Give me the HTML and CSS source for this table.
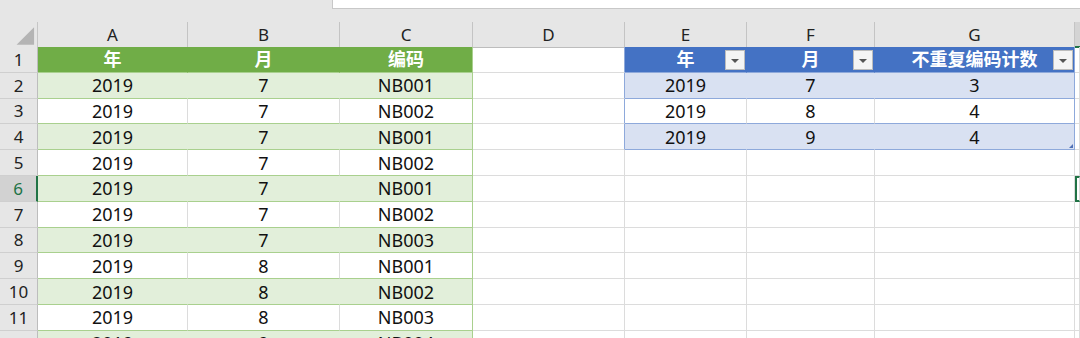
FILE: index.html
```html
<!DOCTYPE html>
<html lang="zh">
<head>
<meta charset="utf-8">
<link rel="stylesheet" href="styles.css">
</head>
<body>
<div class="app">
  <div class="topbar"><div class="fx"></div></div>
  <div class="sheet">
    <div class="row colhead">
      <div class="corner"><svg width="38" height="25" viewBox="0 0 38 25"><polygon points="35,5 35,23 17,23" fill="#b4b4b4"/></svg></div>
      <div class="ch">A</div><div class="ch">B</div><div class="ch">C</div><div class="ch">D</div>
      <div class="ch">E</div><div class="ch">F</div><div class="ch">G</div><div class="ch selc"></div>
    </div>

    <div class="row">
      <div class="rh">1</div>
      <div class="c gh">年</div><div class="c gh">月</div><div class="c gh glast">编码</div>
      <div class="c bpre"></div>
      <div class="c bh">年<span class="dd"></span></div><div class="c bh">月<span class="dd"></span></div><div class="c bh blast">不重复编码计数<span class="dd"></span></div>
      <div class="c"></div>
    </div>

    <div class="row">
      <div class="rh">2</div>
      <div class="c g">2019</div><div class="c g">7</div><div class="c g glast">NB001</div>
      <div class="c bpre"></div>
      <div class="c b">2019</div><div class="c b">7</div><div class="c b blast">3</div>
      <div class="c"></div>
    </div>

    <div class="row">
      <div class="rh">3</div>
      <div class="c gw">2019</div><div class="c gw">7</div><div class="c gw glast">NB002</div>
      <div class="c bpre"></div>
      <div class="c bw">2019</div><div class="c bw">8</div><div class="c bw blast">4</div>
      <div class="c"></div>
    </div>

    <div class="row">
      <div class="rh">4</div>
      <div class="c g">2019</div><div class="c g">7</div><div class="c g glast">NB001</div>
      <div class="c bpre"></div>
      <div class="c b">2019</div><div class="c b">9</div><div class="c b blast">4<span class="handle"></span></div>
      <div class="c"></div>
    </div>

    <div class="row">
      <div class="rh">5</div>
      <div class="c gw">2019</div><div class="c gw">7</div><div class="c gw glast">NB002</div>
      <div class="c"></div><div class="c"></div><div class="c"></div><div class="c"></div><div class="c"></div>
    </div>

    <div class="row">
      <div class="rh selr">6</div>
      <div class="c g">2019</div><div class="c g">7</div><div class="c g glast">NB001</div>
      <div class="c"></div><div class="c"></div><div class="c"></div><div class="c"></div><div class="c active"></div>
    </div>

    <div class="row">
      <div class="rh">7</div>
      <div class="c gw">2019</div><div class="c gw">7</div><div class="c gw glast">NB002</div>
      <div class="c"></div><div class="c"></div><div class="c"></div><div class="c"></div><div class="c"></div>
    </div>

    <div class="row">
      <div class="rh">8</div>
      <div class="c g">2019</div><div class="c g">7</div><div class="c g glast">NB003</div>
      <div class="c"></div><div class="c"></div><div class="c"></div><div class="c"></div><div class="c"></div>
    </div>

    <div class="row">
      <div class="rh">9</div>
      <div class="c gw">2019</div><div class="c gw">8</div><div class="c gw glast">NB001</div>
      <div class="c"></div><div class="c"></div><div class="c"></div><div class="c"></div><div class="c"></div>
    </div>

    <div class="row">
      <div class="rh">10</div>
      <div class="c g">2019</div><div class="c g">8</div><div class="c g glast">NB002</div>
      <div class="c"></div><div class="c"></div><div class="c"></div><div class="c"></div><div class="c"></div>
    </div>

    <div class="row">
      <div class="rh">11</div>
      <div class="c gw">2019</div><div class="c gw">8</div><div class="c gw glast">NB003</div>
      <div class="c"></div><div class="c"></div><div class="c"></div><div class="c"></div><div class="c"></div>
    </div>

    <div class="row">
      <div class="rh">12</div>
      <div class="c g">2019</div><div class="c g">9</div><div class="c g glast">NB004</div>
      <div class="c"></div><div class="c"></div><div class="c"></div><div class="c"></div><div class="c"></div>
    </div>
  </div>
</div>
</body>
</html>
```

FILE: styles.css
```css
html, body {
  margin: 0;
  padding: 0;
  width: 1080px;
  height: 338px;
  overflow: hidden;
  background: #ffffff;
}

.app {
  font-family: "Noto Sans", "Noto Sans CJK SC", sans-serif;
  color: #111;
}

.topbar {
  height: 22px;
  background: #e6e6e6;
  display: flex;
  align-items: flex-start;
}

.fx {
  margin-left: 332px;
  flex: 1;
  height: 8px;
  background: #ffffff;
  border-left: 1px solid #c8c8c8;
  border-bottom: 1px solid #c8c8c8;
}

.sheet {
  display: flex;
  flex-direction: column;
}

.row {
  display: grid;
  grid-template-columns: 38px 150px 152px 133px 152px 122px 128px 200px 1fr;
  height: 25.8px;
}

.row > div {
  box-sizing: border-box;
  display: flex;
  align-items: center;
  justify-content: center;
  position: relative;
  font-size: 18px;
  line-height: 1;
  white-space: nowrap;
}

/* column header row */
.colhead {
  height: 25px;
  background: #e6e6e6;
}

.corner {
  border-right: 1px solid #c6c6c6;
  border-bottom: 1px solid #bdbdbd;
}

.corner svg {
  display: block;
}

.ch {
  font-size: 17px !important;
  color: #222;
  border-right: 1px solid #c4c4c4;
  border-bottom: 1px solid #bdbdbd;
}

.ch.selc {
  background: #d4d4d4;
  border-right: none;
  border-bottom: 2px solid #217346;
}

/* row headers */
.rh {
  background: #e6e6e6;
  color: #222;
  font-size: 17px !important;
  border-right: 1px solid #bdbdbd;
  border-bottom: 1px solid #cfcfcf;
}

.rh.selr {
  background: #d2d2d2;
  color: #217346;
  border-right: 2px solid #217346;
}

/* plain cells */
.c {
  border-right: 1px solid #dcdcdc;
  border-bottom: 1px solid #dcdcdc;
}

/* green table */
.gh {
  background: #70ad47;
  color: #ffffff;
  font-weight: 700;
  border-right-color: #70ad47;
  border-bottom-color: #a9d08e;
}

.g {
  background: #e2efda;
  border-right-color: #e2efda;
  border-bottom-color: #a9d08e;
}

.gw {
  border-bottom-color: #a9d08e;
}

.glast {
  border-right-color: #a9d08e;
}

/* blue table */
.bpre {
  border-right-color: #8ea9db;
}

.bh {
  background: #4472c4;
  color: #ffffff;
  font-weight: 700;
  border-right-color: #4472c4;
  border-bottom-color: #8ea9db;
}

.b {
  background: #d9e1f2;
  border-right-color: #d9e1f2;
  border-bottom-color: #8ea9db;
}

.bw {
  border-bottom-color: #8ea9db;
}

.blast {
  border-right-color: #8ea9db;
}

.dd {
  position: absolute;
  right: 1px;
  top: 3px;
  width: 20px;
  height: 20px;
  box-sizing: border-box;
  background: #f4f4f4;
  border: 1px solid #bcbcbc;
}

.dd::after {
  content: "";
  position: absolute;
  left: 5px;
  top: 8px;
  border-left: 4px solid transparent;
  border-right: 4px solid transparent;
  border-top: 4px solid #555;
}

.handle {
  position: absolute;
  right: 1px;
  bottom: 1px;
  width: 0;
  height: 0;
  border-left: 4px solid transparent;
  border-bottom: 4px solid #4f6fb5;
}

.active {
  border-left: 2px solid #217346;
  border-top: 2px solid #217346;
  border-bottom: 2px solid #217346;
}
```
